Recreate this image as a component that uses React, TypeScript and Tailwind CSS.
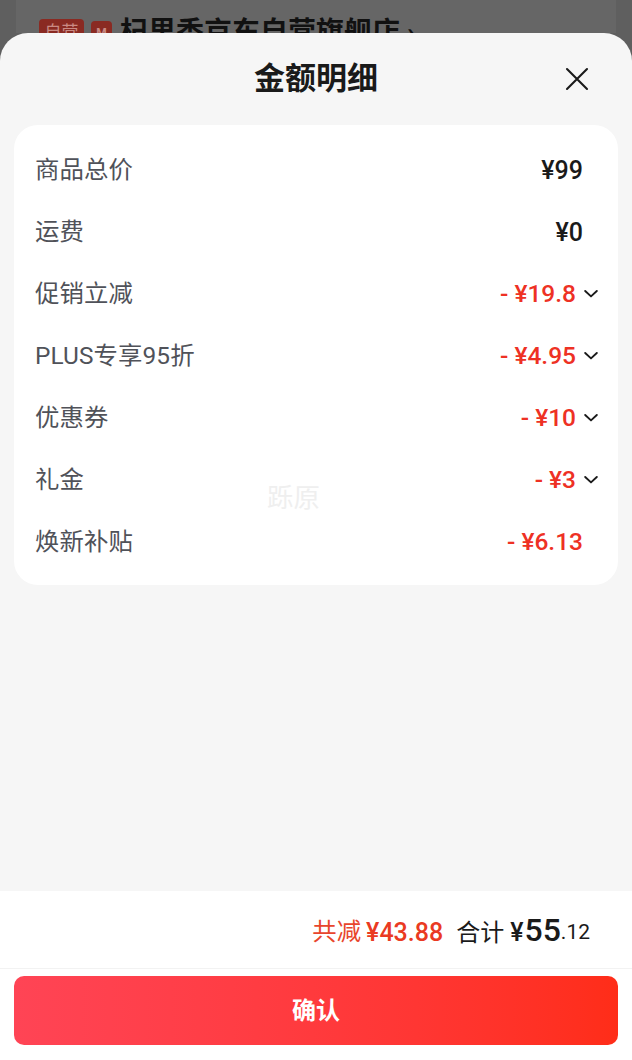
import React from "react";

const font = { fontFamily: '"Roboto","Noto Sans CJK SC",sans-serif' };

function Chevron() {
  return (
    <svg width="14" height="14" viewBox="0 0 14 14" fill="none" className="shrink-0">
      <path d="M1.2 4 L7 9.4 L12.8 4" stroke="#1a1a1a" strokeWidth="1.9" strokeLinecap="round" strokeLinejoin="round" />
    </svg>
  );
}

const rows: { label: string; value: string; red?: boolean; chevron?: boolean }[] = [
  { label: "商品总价", value: "¥99" },
  { label: "运费", value: "¥0" },
  { label: "促销立减", value: "- ¥19.8", red: true, chevron: true },
  { label: "PLUS专享95折", value: "- ¥4.95", red: true, chevron: true },
  { label: "优惠券", value: "- ¥10", red: true, chevron: true },
  { label: "礼金", value: "- ¥3", red: true, chevron: true },
  { label: "焕新补贴", value: "- ¥6.13", red: true },
];

export default function App() {
  return (
    <div className="relative flex h-[1060px] w-[632px] flex-col overflow-hidden bg-[#5f5f5f]" style={font}>
      <div className="mx-[16px] h-[33px] shrink-0 overflow-hidden bg-[#666666] pl-[23px] pt-[19px]">
        <div className="flex h-[28px] items-center">
          <span className="flex h-[28px] w-[45px] items-center justify-center rounded-[4px] bg-[#8a2a22] text-[17px] text-[#c98a84]">自营</span>
          <span className="ml-[7px] flex h-[24px] w-[21px] items-center justify-center rounded-[4px] bg-[#8a2a22] text-[12px] font-bold text-[#c98a84]">M</span>
          <span className="ml-[8px] whitespace-nowrap text-[28px] font-bold leading-[28px] text-[#111111]">杞里香京东自营旗舰店 ›</span>
        </div>
      </div>

      <div className="relative flex min-h-0 flex-1 flex-col rounded-t-[28px] bg-[#f6f6f6]">
        <div className="relative flex h-[92px] shrink-0 items-center justify-center">
          <span className="text-[31px] font-bold text-[#1a1a1a]">金额明细</span>
          <svg width="26" height="26" viewBox="0 0 26 26" fill="none" className="absolute right-[42px] top-[33px]">
            <path d="M3 3 L23 23 M23 3 L3 23" stroke="#1a1a1a" strokeWidth="2.1" strokeLinecap="round" />
          </svg>
        </div>

        <div className="mx-[14px] flex h-[460px] shrink-0 flex-col rounded-[24px] bg-white pl-[21px] pr-[20px] pt-[14px]">
          {rows.map((r) => (
            <div key={r.label} className="flex h-[62px] shrink-0 items-center justify-between">
              <span className="text-[24.4px] tracking-[0.1px] text-[#505259]">{r.label}</span>
              <div className="flex items-center">
                <span className={r.red ? "text-[24.5px] font-medium text-[#ee3124]" : "pt-[2px] text-[25px] font-medium text-[#1a1a1a]"}>{r.value}</span>
                {r.chevron ? (
                  <span className="ml-[8px]"><Chevron /></span>
                ) : (
                  <span className="w-[15px]" />
                )}
              </div>
            </div>
          ))}
        </div>

        <div className="min-h-0 flex-1" />

        <div className="flex h-[169px] shrink-0 flex-col bg-white">
          <div className="flex h-[78px] shrink-0 items-center justify-end border-b border-[#f2f2f2] pr-[42px] pt-[6px]">
            <span className="text-[24.4px] text-[#e8452c]">共减</span>
            <span className="ml-[5px] text-[25px] font-medium text-[#ea3a22]">¥43.88</span>
            <span className="ml-[13px] text-[24px] text-[#1a1a1a]">合计</span>
            <span className="ml-[6px] text-[25px] font-medium text-[#1a1a1a]">¥</span>
            <span className="mb-[5px] ml-[1px] text-[32px] font-medium leading-none text-[#1a1a1a]">55</span>
            <span className="text-[21px] text-[#1a1a1a]">.12</span>
          </div>
          <div className="mx-[14px] mt-[7px] flex h-[69px] items-center justify-center rounded-[10px] bg-gradient-to-r from-[#ff4455] to-[#ff2d18] text-[24px] font-bold text-white">
            确认
          </div>
        </div>
      </div>

      <span className="absolute left-[267px] top-[483px] text-[26.5px] leading-[30px] text-[#efefef]">跞原</span>
    </div>
  );
}
